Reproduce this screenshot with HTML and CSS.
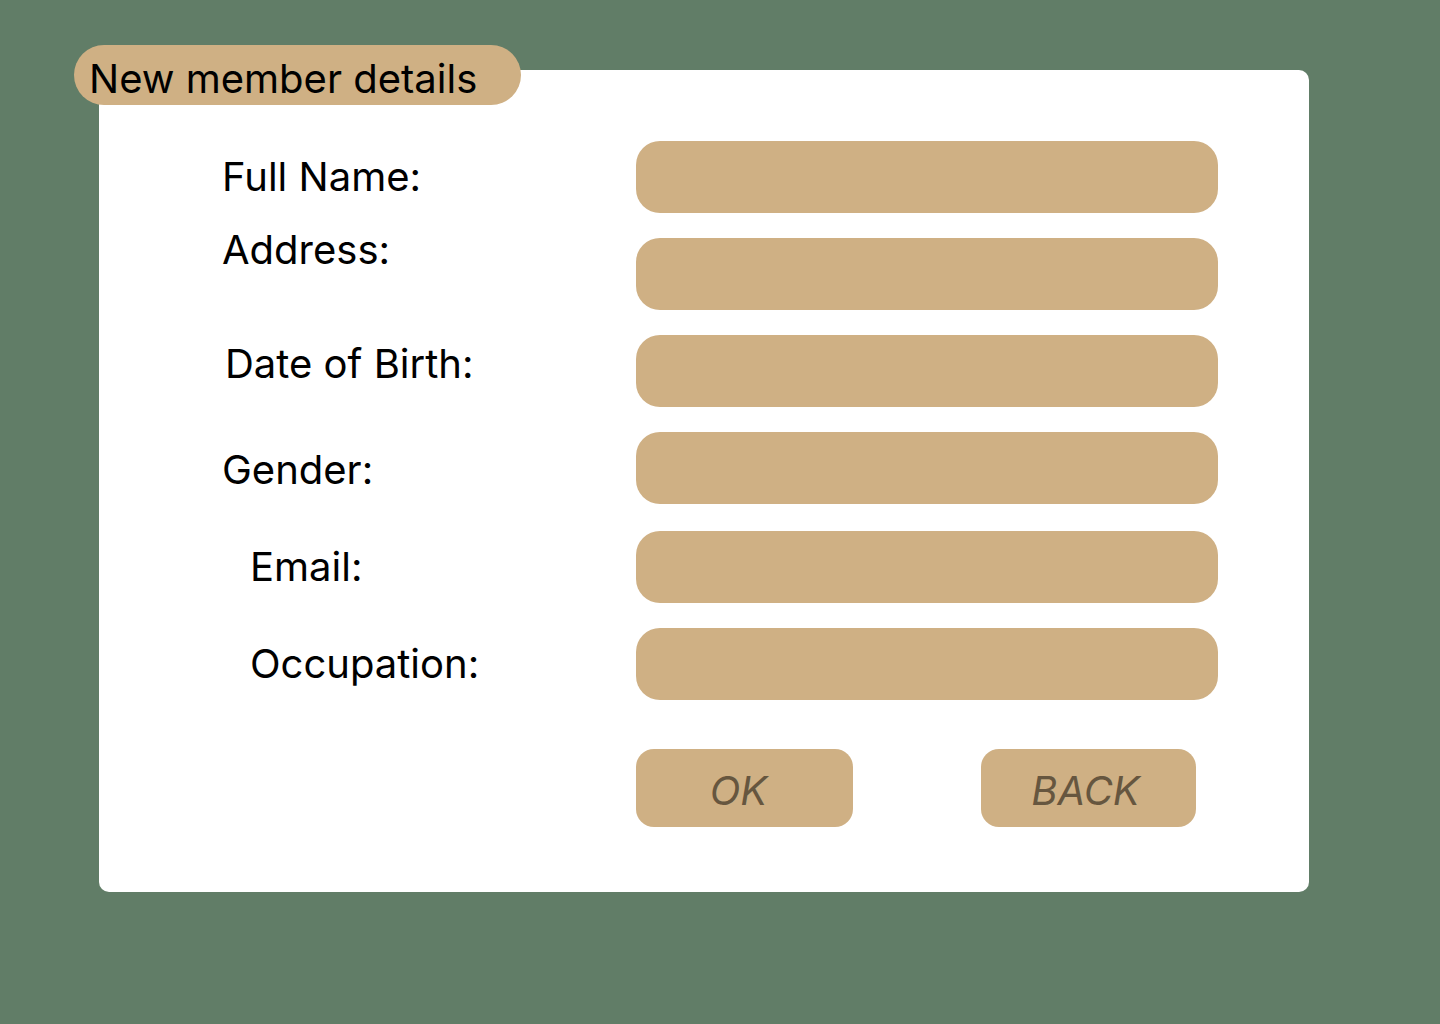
FILE: index.html
```html
<!DOCTYPE html>
<html lang="en">
<head>
<meta charset="utf-8">
<title>New member details</title>
<link rel="stylesheet" href="styles.css">
</head>
<body>
<main class="page">
  <section class="card">
    <h1 class="tab">New member details</h1>
    <div class="form">
      <div class="row">
        <label class="label">Full Name:</label>
        <div class="field"></div>
      </div>
      <div class="row">
        <label class="label label--address">Address:</label>
        <div class="field"></div>
      </div>
      <div class="row">
        <label class="label label--dob">Date of Birth:</label>
        <div class="field"></div>
      </div>
      <div class="row">
        <label class="label label--gender">Gender:</label>
        <div class="field"></div>
      </div>
      <div class="row row--email">
        <label class="label label--indent">Email:</label>
        <div class="field"></div>
      </div>
      <div class="row">
        <label class="label label--indent">Occupation:</label>
        <div class="field"></div>
      </div>
      <div class="actions">
        <button class="btn btn--ok">OK</button>
        <button class="btn btn--back">BACK</button>
      </div>
    </div>
  </section>
</main>
</body>
</html>
```
FILE: styles.css
```css
html, body {
  margin: 0;
  padding: 0;
}
body {
  background: #617d67;
  font-family: Inter, "Noto Sans", sans-serif;
  width: 1440px;
  height: 1024px;
  overflow: hidden;
}
.page {
  padding: 70px 0 0 99px;
}
.card {
  position: relative;
  box-sizing: border-box;
  width: 1210px;
  height: 822px;
  background: #ffffff;
  border-radius: 10px;
  padding: 71px 91px 0 123px;
}
.tab {
  position: absolute;
  left: -25px;
  top: -25px;
  box-sizing: border-box;
  width: 447px;
  height: 60px;
  margin: 0;
  padding: 8px 0 0 15px;
  background: #cfb084;
  border-radius: 30px;
  font-size: 40px;
  font-weight: 400;
  line-height: 52px;
  color: #000;
  white-space: nowrap;
}
.form {
  display: flex;
  flex-direction: column;
  gap: 25px;
}
.row {
  display: flex;
  align-items: center;
  justify-content: space-between;
  height: 72px;
}
.row--email {
  margin-top: 2px;
}
.label {
  font-size: 40px;
  line-height: 24px;
  color: #000;
}
.label--address {
  align-self: flex-start;
}
.label--dob {
  align-self: flex-start;
  padding-top: 17px;
  margin-left: 3px;
}
.label--gender {
  padding-top: 4px;
}
.label--indent {
  margin-left: 28px;
}
.field {
  width: 582px;
  height: 72px;
  background: #cfb084;
  border-radius: 24px;
  flex: none;
}
.actions {
  display: flex;
  gap: 128px;
  margin-top: 24px;
  padding-left: 414px;
}
.btn {
  box-sizing: border-box;
  height: 78px;
  border: none;
  background: #cfb084;
  border-radius: 18px;
  font-family: Inter, "Noto Sans", sans-serif;
  font-style: italic;
  font-size: 40px;
  color: #66563f;
  padding: 6px 0 0 0;
  line-height: 72px;
}
.btn--ok {
  width: 217px;
  padding-right: 12px;
}
.btn--back {
  width: 215px;
  padding-right: 6px;
}
```
